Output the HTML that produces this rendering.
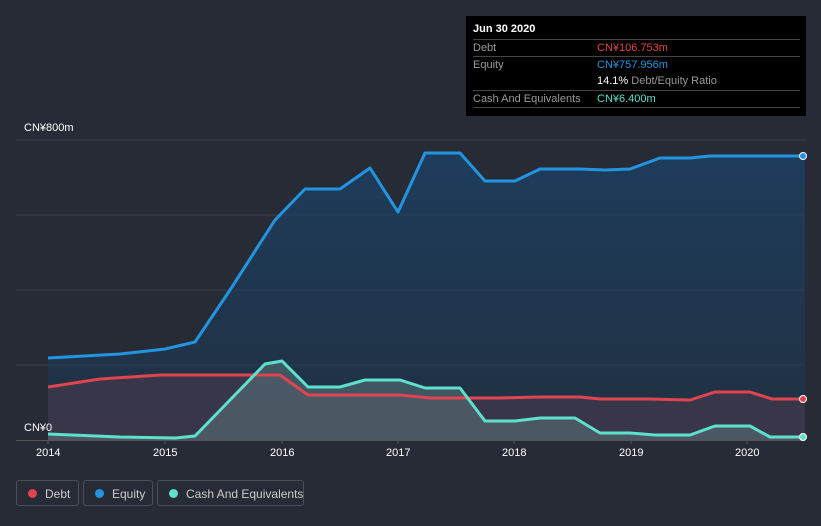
<!DOCTYPE html><html><head><style>
body{margin:0;width:821px;height:526px;background:#262b36;font-family:"Liberation Sans",sans-serif;overflow:hidden;position:relative}
.t{position:absolute;color:#fff;font-size:11px}
.tip{position:absolute;left:466px;top:16px;width:340px;height:100px;background:#000;}
.row{position:absolute;left:7px;width:327px;border-top:1px solid #444;font-size:11px;color:#999;height:16px;line-height:16px}
.leg{position:absolute;top:480px;height:26px;border:1px solid #4a4f5a;border-radius:3px;color:#ccc;font-size:12px;line-height:26px;box-sizing:border-box;white-space:nowrap}
.leg i{position:absolute;left:11px;top:8px;width:9px;height:9px;border-radius:50%}
</style></head><body>
<svg width="821" height="526" style="position:absolute;left:0;top:0">
<defs>
<linearGradient id="eg" x1="0" y1="0" x2="0" y2="1"><stop offset="0" stop-color="#1c4266" stop-opacity=".8"/><stop offset="1" stop-color="#1c3550" stop-opacity=".5"/></linearGradient>
</defs>
<g stroke="#3a404b" stroke-width="1">
<line x1="16" y1="140" x2="805" y2="140"/><line x1="16" y1="215" x2="805" y2="215"/><line x1="16" y1="290" x2="805" y2="290"/><line x1="16" y1="365" x2="805" y2="365"/><line x1="16" y1="440.5" x2="805" y2="440.5" stroke="#555"/>
</g>
<path fill="url(#eg)" d="M48,358 L120,354 165,349 195,342 230,290 275,220 305,189 340,189 370,168 398,212 425,153 460,153 485,181 515,181 540,169 580,169 605,170 630,169 660,158 690,158 710,156 770,156 805,156 L805,440 48,440Z"/>
<path fill="#4a3a4c" opacity=".6" d="M48,387 L100,379 160,375 280,375 308,395 400,395 430,398 500,398 540,397 580,397 600,399 650,399 690,400 715,392 750,392 772,399 805,399 L805,440 48,440Z"/>
<path fill="#5e7a80" opacity=".5" d="M48,434 L120,437 175,438 195,436 230,400 265,364 282,361 308,387 340,387 365,380 400,380 425,388 460,388 485,421 515,421 540,418 575,418 600,433 630,433 655,435 690,435 715,426 750,426 770,437 805,437 L805,440 48,440Z"/>
<g fill="none" stroke-width="3" stroke-linejoin="round">
<polyline stroke="#2394df" points="48,358 120,354 165,349 195,342 230,290 275,220 305,189 340,189 370,168 398,212 425,153 460,153 485,181 515,181 540,169 580,169 605,170 630,169 660,158 690,158 710,156 770,156 805,156"/>
<polyline stroke="#e0444f" points="48,387 100,379 160,375 280,375 308,395 400,395 430,398 500,398 540,397 580,397 600,399 650,399 690,400 715,392 750,392 772,399 805,399"/>
<polyline stroke="#5de0cc" points="48,434 120,437 175,438 195,436 230,400 265,364 282,361 308,387 340,387 365,380 400,380 425,388 460,388 485,421 515,421 540,418 575,418 600,433 630,433 655,435 690,435 715,426 750,426 770,437 805,437"/>
</g>
<circle cx="803" cy="156" r="3.5" fill="#2394df" stroke="#fff" stroke-width="1"/>
<circle cx="803" cy="399" r="3.5" fill="#e0444f" stroke="#fff" stroke-width="1"/>
<circle cx="803" cy="437" r="3.5" fill="#5de0cc" stroke="#fff" stroke-width="1"/>
<g stroke="#555"><line x1="48" y1="440" x2="48" y2="444"/><line x1="165" y1="440" x2="165" y2="444"/><line x1="282" y1="440" x2="282" y2="444"/><line x1="398" y1="440" x2="398" y2="444"/><line x1="514" y1="440" x2="514" y2="444"/><line x1="631" y1="440" x2="631" y2="444"/><line x1="747" y1="440" x2="747" y2="444"/></g>
</svg>
<div class="t" style="left:24px;top:122px">CN¥800m</div>
<div class="t" style="left:24px;top:422px">CN¥0</div>
<div class="t" style="left:36px;top:447px">2014</div>
<div class="t" style="left:153px;top:447px">2015</div>
<div class="t" style="left:270px;top:447px">2016</div>
<div class="t" style="left:386px;top:447px">2017</div>
<div class="t" style="left:502px;top:447px">2018</div>
<div class="t" style="left:619px;top:447px">2019</div>
<div class="t" style="left:735px;top:447px">2020</div>
<div class="tip">
<div style="position:absolute;left:7px;top:7px;color:#fff;font-weight:bold;font-size:11px">Jun 30 2020</div>
<div class="row" style="top:23px">Debt<span style="position:absolute;left:124px;color:#e0444f">CN¥106.753m</span></div>
<div class="row" style="top:40px">Equity<span style="position:absolute;left:124px;color:#2394df">CN¥757.956m</span></div>
<div class="row" style="top:57px;border:none"><span style="position:absolute;left:124px"><b style="color:#fff;font-weight:normal">14.1%</b> Debt/Equity Ratio</span></div>
<div class="row" style="top:74px;border-bottom:1px solid #444">Cash And Equivalents<span style="position:absolute;left:124px;color:#5de0cc">CN¥6.400m</span></div>
</div>
<div class="leg" style="left:16px;width:63px"><i style="background:#e0444f"></i><span style="position:absolute;left:28px">Debt</span></div>
<div class="leg" style="left:83px;width:70px"><i style="background:#2394df"></i><span style="position:absolute;left:28px">Equity</span></div>
<div class="leg" style="left:157px;width:147px"><i style="background:#5de0cc"></i><span style="position:absolute;left:28px">Cash And Equivalents</span></div>
</body></html>
